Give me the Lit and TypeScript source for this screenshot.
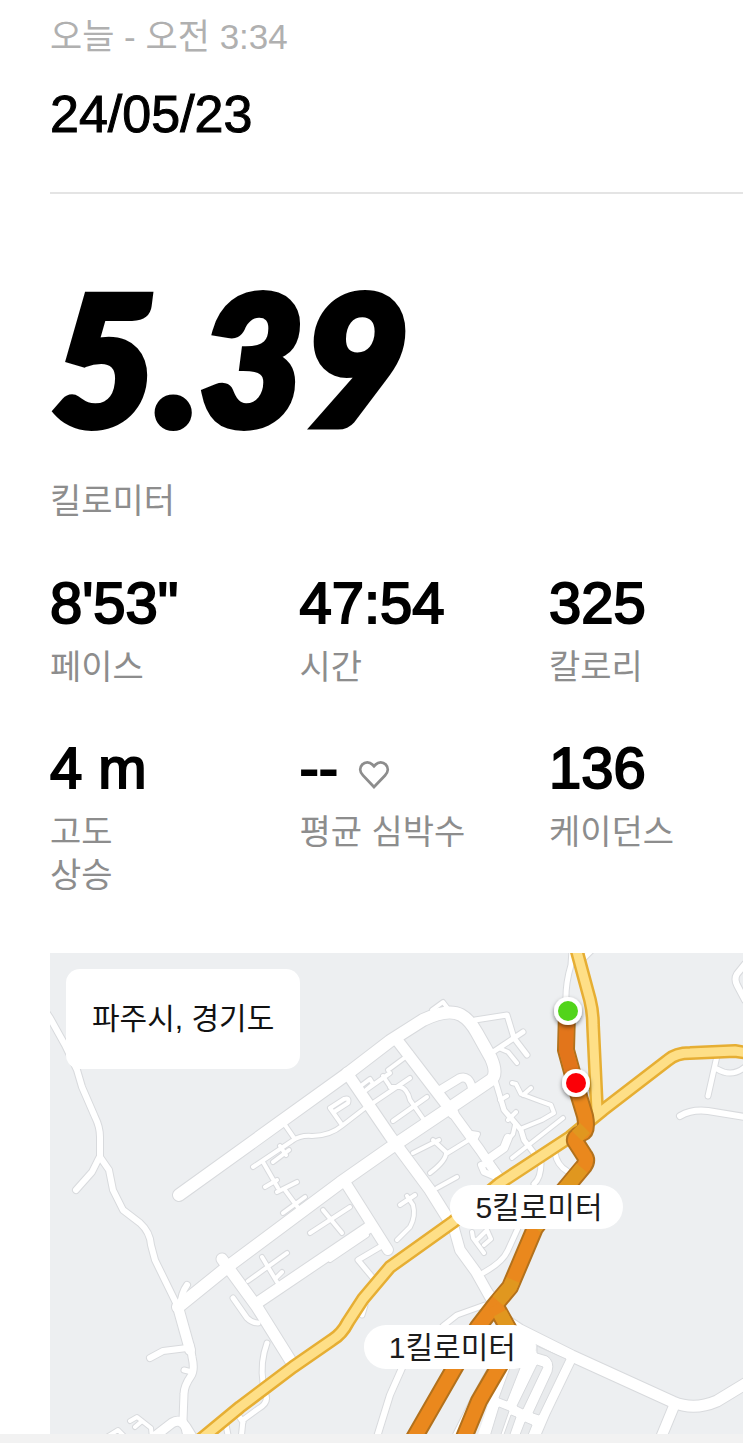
import { LitElement, html, svg, css } from "lit";
import { customElement, property } from "lit/decorators.js";

type Road = [width: number, d: string];

interface Stat {
  value: string;
  label: string;
  heart?: boolean;
}

const STATS: Stat[] = [
  { value: `8'53"`, label: "페이스" },
  { value: "47:54", label: "시간" },
  { value: "325", label: "칼로리" },
  { value: "4 m", label: "고도 상승" },
  { value: "--", label: "평균 심박수", heart: true },
  { value: "136", label: "케이던스" },
];

/* Local streets, drawn in the map's own coordinate space. */
const ROADS: Road[] = [
  [6, "M46 1012L50 1018L65 1045L77 1070L82 1087L95 1117Q100 1127 100 1137V1157L109 1170L113 1190L123 1210L140 1223Q150 1232 151 1245L155 1260L178 1307"],
  [6, "M99 1158L92 1172L76 1190"],
  [6, "M150 1358L163 1351L187 1348"],
  [5, "M184 1370L192 1372"],
  [6, "M187 1285Q181 1293 180 1307"],
  [10, "M178 1307L190 1350"],
  [7, "M190 1345L192 1357Q195 1370 191 1376Q184 1386 184 1394L183 1420L188 1440"],
  [9, "M150 1440L172 1423Q180 1418 186 1427L194 1440"],
  [4, "M105 1438L118 1430L126 1438"],
  [4, "M130 1421L137 1417L151 1428L152 1438M135 1427L142 1421"],
  [12, "M179 1195L347 1074L390 1041L423 1020Q448 1008 461 1015Q470 1020 477 1033L491 1058Q498 1074 491 1080L457 1103L390 1148L340 1183L230 1265L178 1307"],
  [11, "M347 1073L390 1136L430 1190L450 1222"],
  [10, "M345 1182L388 1250"],
  [11, "M397 1040L453 1113"],
  [9, "M453 1113L480 1150L501 1181"],
  [8, "M437 1092L460 1078Q469 1075 472 1088"],
  [11, "M257 1303L368 1228"],
  [11, "M222 1259L257 1307L292 1363"],
  [5, "M233 1298L247 1318Q252 1323 258 1323"],
  [5, "M267 1343Q260 1362 263 1383"],
  [5, "M265 1393Q270 1402 258 1409L243 1420L241 1440M226 1425L229 1440M238 1415L243 1422"],
  [4, "M285 1190L302 1213M283 1213L305 1197"],
  [4, "M323 1210L342 1233M310 1233L350 1207"],
  [4, "M248 1281L287 1253M262 1257L277 1282M277 1277L282 1272"],
  [4, "M330 1260L367 1235"],
  [5, "M380 1247L358 1260L373 1278M365 1305L362 1315"],
  [4, "M285 1125L294 1138"],
  [4, "M253 1167L292 1141Q300 1135 312 1136Q330 1136 343 1125L365 1108M342 1125L330 1108L344 1099Q350 1097 348 1103L334 1112"],
  [4, "M263 1162L278 1188M265 1187L277 1180M297 1182L277 1192M273 1162L289 1150M280 1146L286 1155"],
  [4, "M362 1085L370 1079L373 1084L366 1090L390 1073M383 1076L391 1088M370 1105L410 1078M388 1070L411 1053"],
  [4, "M390 1087H400Q407 1088 410 1100L424 1120M393 1121L427 1097"],
  [5, "M475 1020L507 1015L514 1038L527 1055M523 1032L493 1052"],
  [4, "M501 1049L508 1052L517 1063"],
  [4, "M432 1010L443 1002L449 1010"],
  [4, "M512 1083L516 1084L521 1094L537 1100L551 1105L554 1113L542 1120L520 1129M523 1095L531 1088"],
  [5, "M495 1080L504 1110L521 1130L524 1140L537 1157"],
  [4, "M500 1100L507 1096M508 1120L516 1112M515 1125L513 1134L508 1140"],
  [4, "M563 1118L512 1158"],
  [5, "M555 1153Q557 1165 567 1171M541 1163Q541 1178 534 1184"],
  [8, "M508 1138L504 1148L487 1160"],
  [6, "M481 1165L490 1163L503 1180L484 1172Z"],
  [4, "M465 1132L478 1134L474 1142"],
  [4, "M413 1153L439 1140M433 1140L446 1152Q447 1160 430 1173M446 1154L472 1138M457 1177L437 1188"],
  [5, "M572 950L571 965Q565 985 566 1005M592 950L583 959"],
  [6, "M745 964L737 974Q734 979 737 985L745 1000"],
  [5, "M717 1056L708 1096M717 1069Q732 1078 745 1067"],
  [6, "M680 1116Q692 1109 708 1111L745 1117"],
  [10, "M453 1225L460 1250L476 1272L490 1297"],
  [4, "M463 1257L494 1296M472 1232L473 1238L484 1253M477 1240L487 1230L491 1239L484 1245"],
  [5, "M483 1273Q503 1262 508 1250L518 1228"],
  [5, "M485 1305L457 1315L443 1326"],
  [4, "M397 1240L410 1227Q416 1216 413 1205L407 1196M400 1205L415 1195"],
  [11, "M493 1312L520 1330L572 1356L673 1402Q694 1411 717 1401L745 1384"],
  [10, "M571 1358L545 1412L533 1440"],
  [10, "M674 1406L660 1440"],
  [5, "M491 1368L472 1402L453 1440"],
  [6, "M402 1368L390 1395L377 1437"],
];

/* Parking area: a paved lot with islands between its lanes. */
const LOT = "M500 1360L528 1348L562 1362L556 1390L538 1440L476 1440L490 1400Z";
const ISLANDS = [
  "M510 1368H520L507 1401L499 1398Z",
  "M537 1365L543 1367L523 1409L517 1406Z",
  "M537 1346L566 1359L539 1415L533 1413L552 1372Q555 1361 547 1356L537 1353Z",
  "M499 1407L509 1411L499 1440H489Z",
  "M511 1415L516 1417L508 1440H502Z",
  "M525 1422L532 1425L526 1440H518Z",
];

const HIGHWAYS = [
  "M200 1440L240 1407L293 1367L332 1340Q342 1334 348 1322L363 1299L390 1267L453 1222L500 1183L570 1137L603 1110L668 1060Q676 1053 690 1053L735 1051L748 1053",
  "M576 948L590 1000Q593 1012 593 1025L597 1110",
];

const RUN = [
  "M567 1012L566 1050L575 1083L585 1116Q588 1131 582 1133Q574 1137 575 1141L584 1155Q588 1160 584 1166L564 1190L535 1228L510 1287L495 1305L478 1327L413 1440",
  "M495 1305L509 1330L512 1345L497 1370L479 1401L463 1440",
];

/* Stretches tinted by pace. */
const RUN_FAST = "M567 1012L566 1050L575 1083L578 1093";
const RUN_SLOW = ["M585 1128Q580 1133 577 1136", "M582 1168L564 1190L535 1228", "M513 1280L510 1287L498 1301", "M500 1313L509 1330"];

const MARKERS = [
  { text: "5킬로미터", x: 70.2, y: 52.8 },
  { text: "1킬로미터", x: 57.7, y: 82 },
];

@customElement("run-stat")
class RunStat extends LitElement {
  @property({ attribute: false }) stat!: Stat;

  static styles = css`
    :host {
      display: block;
      min-width: 0;
    }
    .value {
      display: flex;
      align-items: center;
      gap: 20px;
      margin: 0;
      font-size: 58px;
      line-height: 70px;
      color: #000;
      -webkit-text-stroke: 2px #000;
    }
    .label {
      margin: 0;
      padding-top: 8px;
      font-size: 34px;
      line-height: 43px;
      color: #8d8d8d;
      word-break: keep-all;
    }
    .narrow {
      width: min-content;
    }
    .heart {
      width: 32px;
      height: 32px;
      margin-top: 12px;
    }
  `;

  render() {
    const { value, label, heart } = this.stat;
    return html`
      <p class="value">
        <span>${value}</span>
        ${heart
          ? html`<svg class="heart" viewBox="0 0 32 32" aria-hidden="true">
              <path
                d="M16 29L5 17.400C1.500 13.800 1.500 9.500 4.300 6.500C7 3.700 11.600 3.700 14.300 6.500L16 8.300L17.700 6.500C20.400 3.700 25 3.700 27.700 6.500C30.500 9.500 30.500 13.800 27 17.400Z"
                fill="none"
                stroke="#8d8d8d"
                stroke-width="2.800"
              />
            </svg>`
          : null}
      </p>
      <p class="label ${label === "고도 상승" ? "narrow" : ""}">${label}</p>
    `;
  }
}

@customElement("route-map")
class RouteMap extends LitElement {
  static styles = css`
    :host {
      display: block;
      position: relative;
      overflow: hidden;
      background: #edeff1;
    }
    .map {
      display: block;
      width: 100%;
      height: auto;
    }
    .line {
      fill: none;
      stroke-linecap: round;
      stroke-linejoin: round;
    }
    .flat {
      fill: none;
      stroke-linecap: butt;
      stroke-linejoin: round;
    }
    .place {
      position: absolute;
      top: 16px;
      left: 16px;
      box-sizing: border-box;
      padding: 26px;
      border-radius: 14px;
      background: #fff;
      color: #111;
      font-size: 30px;
      line-height: 48px;
      white-space: nowrap;
    }
    .marker {
      position: absolute;
      transform: translate(-50%, -50%);
      padding: 2px 20px 0 25px;
      border-radius: 22px;
      background: #fff;
      color: #1c1c1c;
      font-size: 30px;
      line-height: 42px;
      white-space: nowrap;
    }
  `;

  render() {
    return html`
      <svg class="map" viewBox="50 953 693 481" role="img" aria-label="파주시, 경기도">
        <defs>
          <filter id="drop" x="-50%" y="-50%" width="200%" height="200%">
            <feDropShadow dx="0" dy="2" stdDeviation="2" flood-color="#000" flood-opacity="0.5" />
          </filter>
        </defs>
        ${ROADS.map(([w, d]) => svg`<path class="line" d=${d} stroke="#d8dadd" stroke-width=${w + 2} />`)}
        ${ROADS.map(([w, d]) => svg`<path class="line" d=${d} stroke="#fff" stroke-width=${w} />`)}
        <path d=${LOT} fill="#fff" />
        ${ISLANDS.map((d) => svg`<path d=${d} fill="#e9ebed" stroke="#d8dadd" />`)}
        ${HIGHWAYS.map((d) => svg`<path class="line" d=${d} stroke="#e6ae33" stroke-width="14" />`)}
        ${HIGHWAYS.map((d) => svg`<path class="line" d=${d} stroke="#fedf87" stroke-width="9" />`)}
        ${RUN.map((d) => svg`<path class="flat" d=${d} stroke="#b2711c" stroke-width="18" />`)}
        ${RUN.map((d) => svg`<path class="flat" d=${d} stroke="#ea881d" stroke-width="14" />`)}
        <path class="flat" d=${RUN_FAST} stroke="#e2751b" stroke-width="14" />
        ${RUN_SLOW.map((d) => svg`<path class="flat" d=${d} stroke="#e0971f" stroke-width="14" />`)}
        <circle cx="568" cy="1011" r="14" fill="#fff" filter="url(#drop)" />
        <circle cx="568" cy="1011" r="10" fill="#52d41a" />
        <circle cx="576" cy="1083" r="14" fill="#fff" filter="url(#drop)" />
        <circle cx="576" cy="1083" r="10" fill="#fb0007" />
      </svg>
      <div class="place">파주시, 경기도</div>
      ${MARKERS.map((m) => html`<div class="marker" style="left:${m.x}%;top:${m.y}%">${m.text}</div>`)}
    `;
  }
}

@customElement("app-root")
class AppRoot extends LitElement {
  static styles = css`
    :host {
      display: block;
      background: #fff;
      color: #000;
      font-family: "Liberation Sans", "Noto Sans CJK KR", sans-serif;
    }
    .page {
      padding: 14px 0 0 50px;
    }
    .header {
      padding-bottom: 48px;
      border-bottom: 2px solid #e4e4e4;
    }
    .time {
      margin: 0;
      font-size: 35px;
      line-height: 46px;
      color: #b0b0b0;
    }
    .date {
      margin: 0;
      padding-top: 24px;
      font-size: 52px;
      line-height: 60px;
      font-weight: 400;
      -webkit-text-stroke: 1px #000;
    }
    .distance {
      margin: 0;
      padding: 62px 0 0 2px;
      font-family: Lato, "Open Sans", sans-serif;
      font-size: 180px;
      line-height: 200px;
      font-weight: 900;
      font-style: italic;
      -webkit-text-stroke: 8px #000;
    }
    .unit {
      margin: 0;
      padding-top: 24px;
      font-size: 34px;
      line-height: 43px;
      color: #8d8d8d;
    }
    .stats {
      display: grid;
      grid-template-columns: repeat(2, 36%) 1fr;
      row-gap: 44px;
      padding: 45px 0 56px;
    }
    .footer {
      height: 9px;
      background: #f2f2f2;
    }
  `;

  render() {
    return html`
      <main class="page">
        <header class="header">
          <p class="time">오늘 - 오전 3:34</p>
          <h1 class="date">24/05/23</h1>
        </header>
        <p class="distance">5.39</p>
        <p class="unit">킬로미터</p>
        <section class="stats">${STATS.map((s) => html`<run-stat .stat=${s}></run-stat>`)}</section>
        <route-map></route-map>
      </main>
      <div class="footer"></div>
    `;
  }
}
